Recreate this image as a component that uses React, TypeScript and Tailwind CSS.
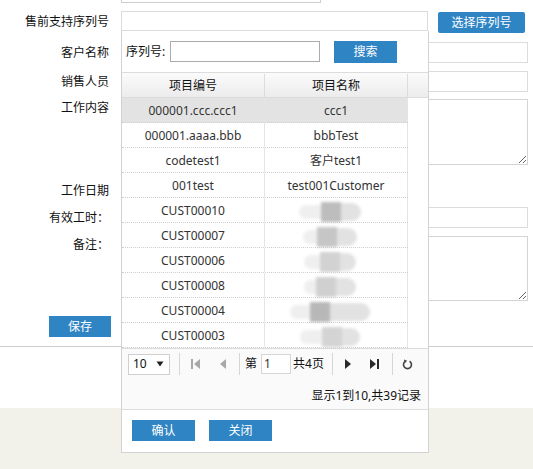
import type { ReactNode } from 'react'

const rows: { code: string; name?: string; blob?: [number, string, number] }[] = [
  { code: '000001.ccc.ccc1', name: 'ccc1' },
  { code: '000001.aaaa.bbb', name: 'bbbTest' },
  { code: 'codetest1', name: '客户test1' },
  { code: '001test', name: 'test001Customer' },
  { code: 'CUST00010', blob: [22, '#bdbdbd', 20] },
  { code: 'CUST00007', blob: [14, '#c6c6c6', 20] },
  { code: 'CUST00006', blob: [16, '#d2d2d2', 16] },
  { code: 'CUST00008', blob: [12, '#d0d0d0', 20] },
  { code: 'CUST00004', blob: [20, '#b8b8b8', 40] },
  { code: 'CUST00003', blob: [22, '#d4d4d4', 18] },
]

function Campo({ label, top, className, children }: { label: string; top?: boolean; className: string; children: ReactNode }) {
  return (
    <div className={`flex ${top ? 'items-start' : 'items-center'} ${className}`}>
      <div className={`w-[109px] shrink-0 text-right leading-[14px] ${top ? 'pt-[2px]' : ''}`}>{label}</div>
      <div className="ml-[12px] flex items-start">{children}</div>
    </div>
  )
}

function Separador() {
  return <div className="h-[22px] w-px bg-[#d6d6d6]" />
}

function Borron({ izq, color, der }: { izq: number; color: string; der: number }) {
  return (
    <div className="flex h-[20px] items-center blur-[1.5px]">
      <div className="h-[14px] rounded-l-full bg-[#efefef]" style={{ width: izq }} />
      <div className="h-[20px] w-[20px]" style={{ backgroundColor: color }} />
      <div className="h-[18px] rounded-r-full bg-[#e2e2e2]" style={{ width: der }} />
    </div>
  )
}

export default function App() {
  return (
    <div className="relative h-[469px] w-[533px] overflow-hidden bg-white font-['Noto_Sans','Noto_Sans_CJK_SC',sans-serif] text-[12px] text-[#111]">
      <div className="flex h-full flex-col">
        <div className="ml-[121px] h-[3px] w-[200px] border-x border-b border-[#cfcfcf]" />

        <Campo label="售前支持序列号" className="mt-[8px]">
          <div className="h-[20px] w-[307px] border border-[#dcdcdc]" />
          <button className="ml-[10px] mt-[1px] h-[21px] w-[87px] rounded-[2px] bg-[#2f85c4] text-[12px] leading-[21px] text-white">
            选择序列号
          </button>
        </Campo>
        <Campo label="客户名称" className="mt-[9px]">
          <div className="h-[21px] w-[407px] border border-[#dcdcdc]" />
        </Campo>
        <Campo label="销售人员" className="mt-[8px]">
          <div className="h-[21px] w-[407px] border border-[#dcdcdc]" />
        </Campo>
        <Campo label="工作内容" top className="mt-[7px]">
          <textarea readOnly className="block h-[66px] w-[407px] border border-[#d4d4d4] outline-none" />
        </Campo>
        <Campo label="工作日期" className="mt-[15px]">
          <div className="h-[21px] w-[150px] border border-[#dcdcdc]" />
        </Campo>
        <Campo label="有效工时：" className="mt-[6px]">
          <div className="h-[21px] w-[407px] border border-[#dcdcdc]" />
        </Campo>
        <Campo label="备注：" top className="mt-[8px]">
          <textarea readOnly className="block h-[65px] w-[407px] border border-[#d4d4d4] outline-none" />
        </Campo>
        <div className="mt-[15px] pl-[49px]">
          <button className="h-[21px] w-[62px] bg-[#2f85c4] text-[12px] leading-[21px] text-white">保存</button>
        </div>
        <div className="mt-[9px] h-[62px] border-t border-[#cccccc]" />
        <div className="flex-1 bg-[#f3f2ea]" />
      </div>

      <div className="absolute left-[121px] top-[31px] flex h-[422px] w-[308px] flex-col border-x border-b border-[#d2d2d2] bg-white">
        <div className="flex h-[41px] shrink-0 items-start pt-[10px]">
          <span className="w-[48px] pl-[4px] leading-[21px]">序列号:</span>
          <div className="h-[21px] w-[150px] border border-[#ababab]" />
          <button className="ml-[14px] h-[22px] w-[63px] bg-[#2f85c4] text-[12px] leading-[22px] text-white">搜索</button>
        </div>

        <div className="flex h-[26px] shrink-0 border-y border-[#dcdcdc] bg-gradient-to-b from-[#fbfbfb] to-[#ececec] pt-[1px] leading-[24px] text-[#111]">
          <div className="w-[143px] border-r border-[#dcdcdc] text-center">项目编号</div>
          <div className="w-[143px] border-r border-[#dcdcdc] text-center">项目名称</div>
          <div className="flex-1" />
        </div>

        <div className="flex h-[250px] shrink-0">
          <div className="flex w-[286px] flex-col">
            {rows.map((r, i) => (
              <div
                key={r.code}
                className={`flex h-[25px] border-b border-dotted border-[#cfcfcf] text-[#333] ${i === 0 ? 'bg-[#e3e3e3]' : ''}`}
              >
                <div className="w-[143px] border-r border-[#e4e4e4] pt-[2px] text-center leading-[22px]">{r.code}</div>
                <div className="flex w-[143px] items-center justify-center border-r border-[#e4e4e4] pt-[2px] leading-[22px]">
                  {r.name ?? (r.blob && <div className="mr-[12px] mt-[1px]"><Borron izq={r.blob[0]} color={r.blob[1]} der={r.blob[2]} /></div>)}
                </div>
              </div>
            ))}
          </div>
          <div className="flex-1" />
        </div>

        <div className="flex h-[62px] shrink-0 flex-col border-y border-[#dcdcdc] bg-[#fafafa]">
          <div className="mt-[4px] flex h-[22px] items-center">
            <div className="ml-[6px] flex h-[21px] w-[42px] items-center border border-[#cfcfcf] bg-white pl-[4px]">
              <span className="text-[12px]">10</span>
              <svg width="8" height="6" viewBox="0 0 8 6" className="ml-[9px]"><path d="M0.5 0.5h7L4 5.5z" fill="#222" /></svg>
            </div>
            <div className="ml-[9px]"><Separador /></div>
            <div className="ml-[7px] flex w-[16px] justify-center">
              <svg width="9" height="10" viewBox="0 0 9 10"><rect x="0" y="0" width="2" height="10" fill="#a8a8a8" /><path d="M9 0v10L3 5z" fill="#a8a8a8" /></svg>
            </div>
            <div className="ml-[12px] flex w-[16px] justify-center">
              <svg width="6" height="10" viewBox="0 0 6 10"><path d="M6 0v10L0 5z" fill="#a8a8a8" /></svg>
            </div>
            <div className="ml-[8px]"><Separador /></div>
            <span className="ml-[5px]">第</span>
            <div className="ml-[4px] flex h-[20px] w-[30px] items-center border border-[#d6d6d6] bg-white pl-[2px] text-[#333]">1</div>
            <span className="ml-[2px]">共4页</span>
            <div className="ml-[8px]"><Separador /></div>
            <div className="ml-[7px] flex w-[16px] justify-center">
              <svg width="6" height="10" viewBox="0 0 6 10"><path d="M0 0v10L6 5z" fill="#2a2a2a" /></svg>
            </div>
            <div className="ml-[11px] flex w-[16px] justify-center">
              <svg width="9" height="10" viewBox="0 0 9 10"><path d="M0 0v10L6 5z" fill="#2a2a2a" /><rect x="7" y="0" width="2" height="10" fill="#2a2a2a" /></svg>
            </div>
            <div className="ml-[9px]"><Separador /></div>
            <div className="ml-[7px] flex w-[16px] justify-center">
              <svg width="11" height="11" viewBox="0 0 11 11">
                <path d="M7.6 2.2A4 4 0 1 1 3.2 2.3" fill="none" stroke="#444" strokeWidth="1.6" />
                <path d="M2 0.6l3.2 1.2L2.6 4.2z" fill="#444" />
              </svg>
            </div>
          </div>
          <div className="mt-[11px] pr-[7px] text-right leading-[20px]">显示1到10,共39记录</div>
        </div>

        <div className="flex flex-1 items-start gap-[14px] pl-[10px] pt-[10px]">
          <button className="h-[21px] w-[63px] bg-[#2f85c4] text-[12px] leading-[21px] text-white">确认</button>
          <button className="h-[21px] w-[63px] bg-[#2f85c4] text-[12px] leading-[21px] text-white">关闭</button>
        </div>
      </div>
    </div>
  )
}
